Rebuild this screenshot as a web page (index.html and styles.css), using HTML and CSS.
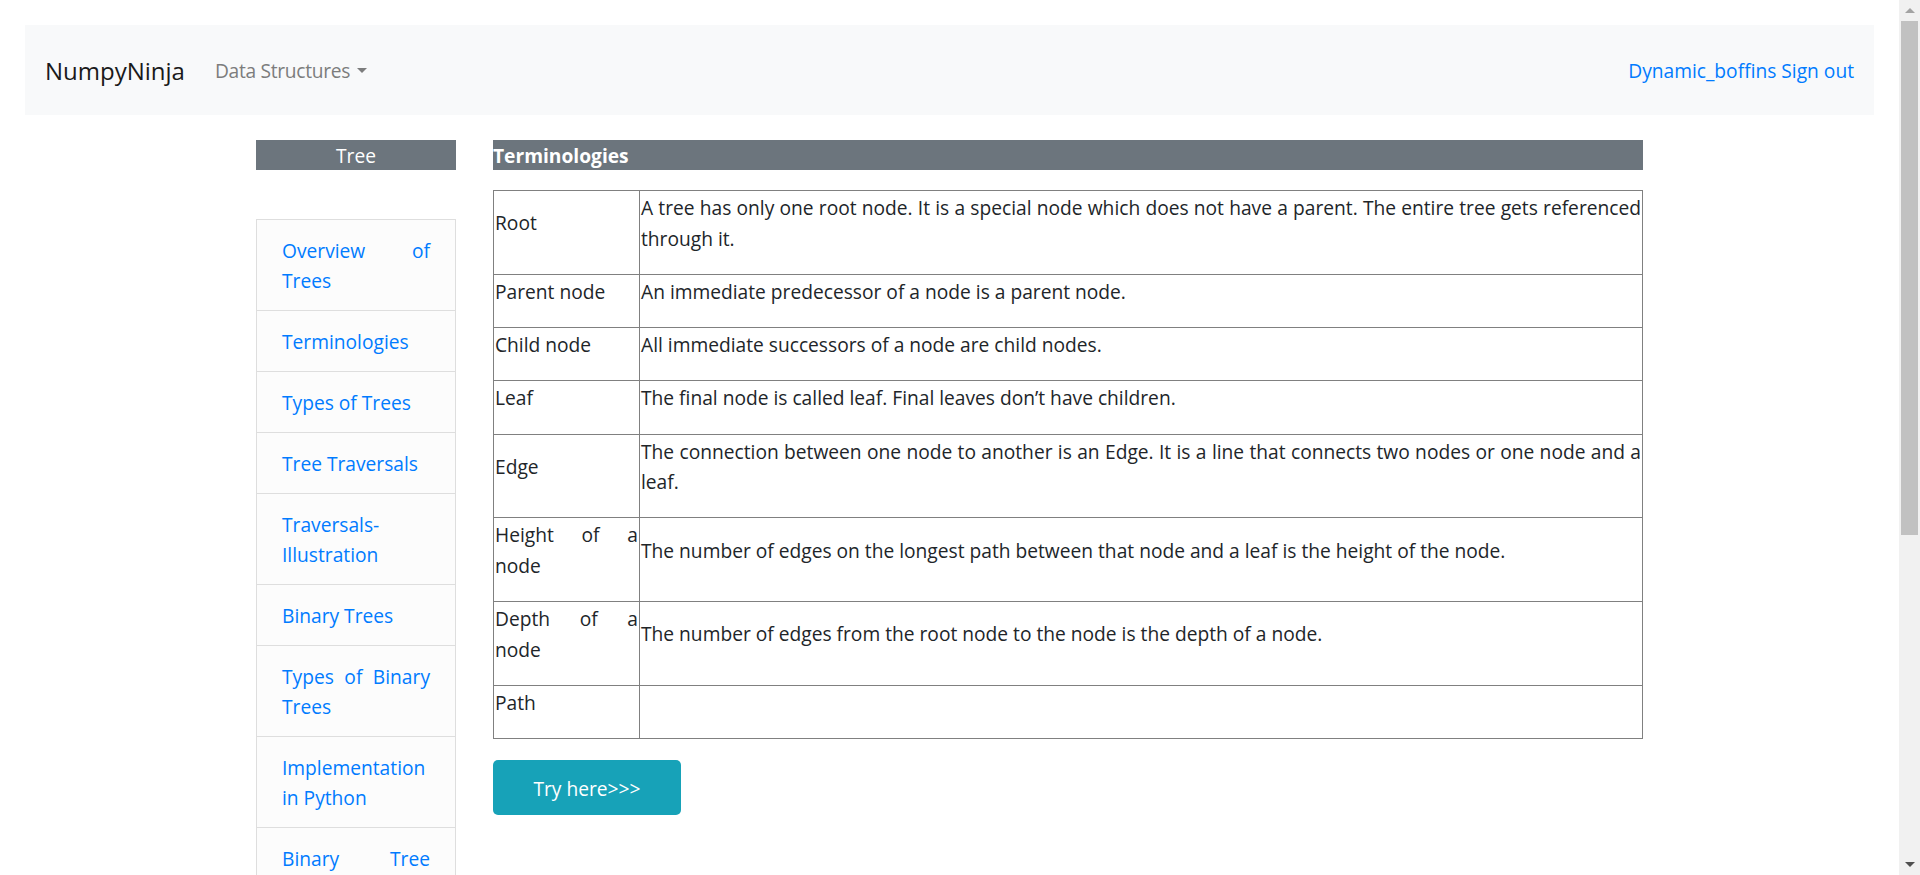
FILE: index.html
```html
<!DOCTYPE html>
<html lang="en">
<head>
<meta charset="utf-8">
<title>Tree - Terminologies</title>
<link rel="stylesheet" href="styles.css">
</head>
<body>
<div class="screen">
  <div class="viewport">
    <nav class="navbar">
      <a class="brand" href="#">NumpyNinja</a>
      <div class="nav-dropdown">Data Structures<span class="caret"></span></div>
      <div class="nav-right">
        <a class="nav-link" href="#">Dynamic_boffins</a>
        <a class="nav-link" href="#">Sign out</a>
      </div>
    </nav>

    <div class="container">
      <aside class="sidebar">
        <div class="side-title">Tree</div>
        <ul class="topic-list">
          <li class="topic"><a href="#">Overview of Trees</a></li>
          <li class="topic"><a href="#">Terminologies</a></li>
          <li class="topic"><a href="#">Types of Trees</a></li>
          <li class="topic"><a href="#">Tree Traversals</a></li>
          <li class="topic"><a href="#">Traversals-Illustration</a></li>
          <li class="topic"><a href="#">Binary Trees</a></li>
          <li class="topic"><a href="#">Types of Binary Trees</a></li>
          <li class="topic"><a href="#">Implementation in Python</a></li>
          <li class="topic"><a href="#">Binary Tree Traversals</a></li>
          <li class="topic"><a href="#">Implementation of Binary Trees</a></li>
          <li class="topic"><a href="#">Applications of Binary trees</a></li>
        </ul>
      </aside>

      <main class="content">
        <div class="content-title">Terminologies</div>
        <table class="terms">
          <colgroup>
            <col class="col-term">
            <col class="col-desc">
          </colgroup>
          <tbody>
            <tr>
              <td><p>Root</p></td>
              <td><p>A tree has only one root node. It is a special node which does not have a parent. The entire tree gets referenced through it.</p></td>
            </tr>
            <tr>
              <td><p>Parent node</p></td>
              <td><p>An immediate predecessor of a node is a parent node.</p></td>
            </tr>
            <tr>
              <td><p>Child node</p></td>
              <td><p>All immediate successors of a node are child nodes.</p></td>
            </tr>
            <tr>
              <td><p>Leaf</p></td>
              <td><p>The final node is called leaf. Final leaves don’t have children.</p></td>
            </tr>
            <tr>
              <td><p>Edge</p></td>
              <td><p>The connection between one node to another is an Edge. It is a line that connects two nodes or one node and a leaf.</p></td>
            </tr>
            <tr>
              <td><p>Height of a node</p></td>
              <td><p>The number of edges on the longest path between that node and a leaf is the height of the node.</p></td>
            </tr>
            <tr>
              <td><p>Depth of a node</p></td>
              <td><p>The number of edges from the root node to the node is the depth of a node.</p></td>
            </tr>
            <tr>
              <td><p>Path</p></td>
              <td></td>
            </tr>
          </tbody>
        </table>
        <a class="btn-try" href="#">Try here&gt;&gt;&gt;</a>
      </main>
    </div>
  </div>

  <div class="scrollbar">
    <div class="sb-arrow sb-up"></div>
    <div class="sb-track">
      <div class="sb-thumb"></div>
    </div>
    <div class="sb-arrow sb-down"></div>
  </div>
</div>
</body>
</html>
```

FILE: styles.css
```css
* {
  box-sizing: border-box;
}

html, body {
  margin: 0;
  padding: 0;
  height: 875px;
  overflow: hidden;
  background: #ffffff;
}

body {
  font-family: "Open Sans", "Noto Sans", "Liberation Sans", sans-serif;
  font-size: 19.2px;
  line-height: 30px;
  color: #212529;
}

a {
  text-decoration: none;
  color: #007bff;
}

.screen {
  display: flex;
  height: 875px;
  width: 1920px;
}

.viewport {
  flex: 1 1 auto;
  min-width: 0;
  height: 875px;
  overflow: hidden;
}

/* ---------- navbar ---------- */
.navbar {
  margin: 25px 25px 0;
  height: 90px;
  padding: 0 20px;
  background: #f8f9fa;
  display: flex;
  align-items: center;
}

.brand {
  font-size: 24px;
  line-height: 36px;
  color: #1a1a1a;
  margin-right: 20px;
  padding-top: 2px;
}

.nav-dropdown {
  padding: 2px 10px 0;
  color: #7c7d7d;
  font-size: 19.2px;
  letter-spacing: -0.3px;
}

.caret {
  display: inline-block;
  margin-left: 7px;
  vertical-align: 5px;
  width: 0;
  height: 0;
  border-top: 5px solid #7c7d7d;
  border-left: 5px solid transparent;
  border-right: 5px solid transparent;
}

.nav-right {
  margin-left: auto;
  display: flex;
  gap: 5px;
  padding-top: 2px;
}

/* ---------- layout ---------- */
.container {
  width: 1387px;
  margin: 25px auto 0;
  display: flex;
  gap: 37px;
  align-items: flex-start;
}

.sidebar {
  width: 200px;
  flex: 0 0 200px;
}

.side-title {
  height: 30px;
  line-height: 32px;
  background: #6c757d;
  color: #ffffff;
  text-align: center;
}

.topic-list {
  list-style: none;
  margin: 49px 0 0;
  padding: 0;
}

.topic {
  border: 1px solid #dedede;
  margin-bottom: -1px;
  padding: 16px 25px 14px;
  background: #fcfcfc;
  text-align: justify;
}

.content {
  flex: 1 1 auto;
  min-width: 0;
}

.content-title {
  height: 30px;
  line-height: 32px;
  background: #6c757d;
  color: #ffffff;
  font-weight: bold;
}

/* ---------- table ---------- */
.terms {
  margin-top: 20px;
  width: 1150px;
  border-collapse: collapse;
  table-layout: fixed;
}

.col-term {
  width: 146px;
}

.terms td {
  border: 1px solid #808080;
  padding: 1px;
  vertical-align: middle;
  text-align: justify;
  line-height: 30.5px;
}

.terms p {
  margin: 0 0 18.75px;
  padding-top: 1px;
}

/* ---------- button ---------- */
.btn-try {
  display: flex;
  align-items: center;
  justify-content: center;
  margin-top: 21px;
  width: 188px;
  height: 55px;
  padding-top: 2px;
  background: #17a2b8;
  color: #ffffff;
  border-radius: 5px;
}

/* ---------- fake scrollbar ---------- */
.scrollbar {
  flex: 0 0 21px;
  width: 21px;
  height: 875px;
  background: #f1f1f1;
  display: flex;
  flex-direction: column;
}

.sb-arrow {
  height: 21px;
  flex: 0 0 21px;
  display: flex;
  align-items: center;
  justify-content: center;
}

.sb-up::before {
  content: "";
  border-bottom: 5px solid #a3a3a3;
  border-left: 5px solid transparent;
  border-right: 5px solid transparent;
}

.sb-down::before {
  content: "";
  border-top: 5px solid #505050;
  border-left: 5px solid transparent;
  border-right: 5px solid transparent;
}

.sb-track {
  flex: 1 1 auto;
  padding: 0 2px;
}

.sb-thumb {
  height: 514px;
  background: #c1c1c1;
}
```
